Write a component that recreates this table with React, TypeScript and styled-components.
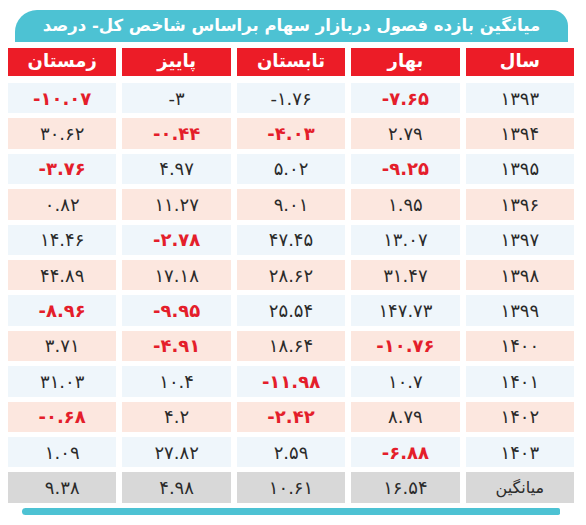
import React from "react";
import styled, { createGlobalStyle } from "styled-components";

const GlobalStyle = createGlobalStyle`
  html, body {
    margin: 0;
    padding: 0;
    background: #fff;
  }
  body {
    font-family: "DejaVu Sans", "Noto Sans", sans-serif;
  }
`;

const Page = styled.div`
  width: 586px;
  height: 525px;
  box-sizing: border-box;
  padding: 10px 12px 0 8px;
  display: flex;
  flex-direction: column;
  direction: rtl;
`;

const TitleBar = styled.div`
  margin: 0 6px 0 7px;
  height: 32px;
  background: #4dc2d3;
  border-radius: 22px 16px 0 0;
  color: #fff;
  font-size: 16.5px;
  font-weight: bold;
  display: flex;
  align-items: center;
  justify-content: center;
  padding-bottom: 2px;
  box-sizing: border-box;
`;

const Grid = styled.div`
  margin-top: 6px;
  display: grid;
  grid-template-columns: repeat(5, 1fr);
  grid-template-rows: 30px;
  grid-auto-rows: 30.4px;
  gap: 5px 6px;
`;

const HeadCell = styled.div`
  background: #ec1c27;
  color: #fff;
  font-weight: bold;
  font-size: 18px;
  display: flex;
  align-items: center;
  justify-content: center;
  padding-bottom: 3px;
  margin-bottom: 2px;
`;

type Tone = "blue" | "pink" | "gray";

const tones: Record<Tone, string> = {
  blue: "#eff6fb",
  pink: "#fce7df",
  gray: "#d8d8d8",
};

const Cell = styled.div<{ $tone: Tone; $neg?: boolean }>`
  background: ${({ $tone }) => tones[$tone]};
  color: ${({ $neg }) => ($neg ? "#e41e2b" : "#2b2b2b")};
  font-weight: ${({ $neg }) => ($neg ? "bold" : "normal")};
  font-size: 18px;
  display: flex;
  align-items: center;
  justify-content: center;
  direction: ltr;
  letter-spacing: -0.5px;
`;

const Label = styled.span`
  font-size: 16px;
  letter-spacing: 0;
`;

const FooterBar = styled.div`
  margin: 5px 14px 0 14px;
  height: 7px;
  background: #4dc2d3;
  border-radius: 8px 4px 4px 8px;
`;

const fa = (s: string) => s.replace(/\d/g, (d) => "۰۱۲۳۴۵۶۷۸۹"[Number(d)]);

// year, spring, summer, autumn, winter; "!" marks values drawn in red
const rows: string[][] = [
  ["1393", "!-7.65", "-1.76", "-3", "!-10.07"],
  ["1394", "2.79", "!-4.03", "!-0.44", "30.62"],
  ["1395", "!-9.25", "5.02", "4.97", "!-3.76"],
  ["1396", "1.95", "9.01", "11.27", "0.82"],
  ["1397", "13.07", "47.45", "!-2.78", "14.46"],
  ["1398", "31.47", "28.62", "17.18", "44.89"],
  ["1399", "147.73", "25.54", "!-9.95", "!-8.96"],
  ["1400", "!-10.76", "18.64", "!-4.91", "3.71"],
  ["1401", "10.7", "!-11.98", "10.4", "31.03"],
  ["1402", "8.79", "!-2.42", "4.2", "!-0.68"],
  ["1403", "!-6.88", "2.59", "27.82", "1.09"],
];

const average = ["16.54", "10.61", "4.98", "9.38"];
const heads = ["سال", "بهار", "تابستان", "پاییز", "زمستان"];

export default function App() {
  return (
    <>
      <GlobalStyle />
      <Page>
        <TitleBar>میانگین بازده فصول دربازار سهام براساس شاخص کل- درصد</TitleBar>
        <Grid>
          {heads.map((h) => (
            <HeadCell key={h}>{h}</HeadCell>
          ))}
          {rows.map((row, i) =>
            row.map((v, j) => {
              const neg = v.startsWith("!");
              return (
                <Cell key={`${i}-${j}`} $tone={i % 2 === 0 ? "blue" : "pink"} $neg={neg}>
                  {fa(neg ? v.slice(1) : v)}
                </Cell>
              );
            })
          )}
          <Cell $tone="gray">
            <Label>میانگین</Label>
          </Cell>
          {average.map((v) => (
            <Cell key={v} $tone="gray">
              {fa(v)}
            </Cell>
          ))}
        </Grid>
        <FooterBar />
      </Page>
    </>
  );
}
